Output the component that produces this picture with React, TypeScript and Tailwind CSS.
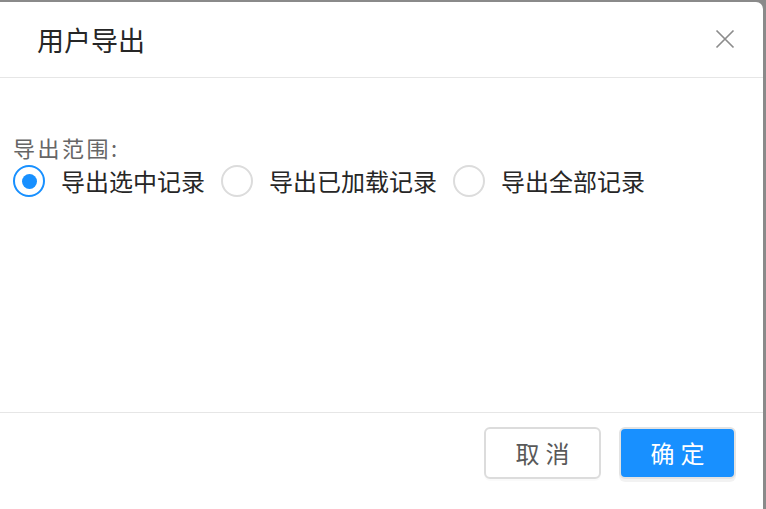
import { useState } from "react";

const options = [
  { value: "selected", label: "导出选中记录" },
  { value: "loaded", label: "导出已加载记录" },
  { value: "all", label: "导出全部记录" },
];

const CloseIcon = () => (
  <svg width="20" height="20" viewBox="0 0 20 20" fill="none">
    <path d="M1.5 1.5L18.5 18.5M18.5 1.5L1.5 18.5" stroke="#8c8c8c" strokeWidth="1.7" />
  </svg>
);

export default function App() {
  const [scope, setScope] = useState("selected");

  return (
    <div
      className="h-[509px] w-[766px] overflow-hidden bg-[#8a8a8a] pt-[2px] pr-[3px]"
      style={{ fontFamily: '"Noto Sans CJK SC", "Noto Sans", sans-serif' }}
    >
      <div className="flex h-[520px] flex-col rounded-tr-[7px] bg-white">
        {/* Header */}
        <div className="flex h-[76px] shrink-0 items-center justify-between border-b border-[#e6e6e6] pl-[37px] pr-[28px]">
          <h2 className="text-[27px] leading-none text-[#262626]">用户导出</h2>
          <button className="-mt-[2px]">
            <CloseIcon />
          </button>
        </div>

        {/* Body */}
        <div className="h-[334px] shrink-0 pl-[13px] pt-[57px]">
          <p className="text-[22px] leading-[24px] tracking-[2.5px] text-[#666]">
            导出范围:
          </p>
          <div className="mt-[6px] flex items-center">
            {options.map((opt) => {
              const checked = scope === opt.value;
              return (
                <label
                  key={opt.value}
                  className="mr-[16px] flex cursor-pointer items-center"
                  onClick={() => setScope(opt.value)}
                >
                  <span
                    className={
                      checked
                        ? "flex h-[32px] w-[32px] items-center justify-center rounded-full border-2 border-[#1890ff]"
                        : "flex h-[32px] w-[32px] items-center justify-center rounded-full border-2 border-[#dcdcdc]"
                    }
                  >
                    {checked && (
                      <span className="h-[15px] w-[15px] rounded-full bg-[#1890ff]" />
                    )}
                  </span>
                  <span className="ml-[16px] text-[24px] leading-[32px] text-[#262626]">
                    {opt.label}
                  </span>
                </label>
              );
            })}
          </div>
        </div>

        {/* Footer */}
        <div className="flex justify-end gap-[18px] border-t border-[#e6e6e6] pr-[27px] pt-[14px]">
          <button className="h-[52px] w-[117px] rounded-[6px] border-2 border-[#dcdcdc] bg-white pl-[6px] text-[24px] tracking-[6px] text-[#595959] shadow-[0_2px_0_rgba(0,0,0,0.02)]">
            取消
          </button>
          <button className="h-[52px] w-[117px] rounded-[6px] border-2 border-[#e3e3e3] bg-[#1890ff] pl-[6px] text-[24px] tracking-[6px] text-white shadow-[0_3px_0_rgba(0,0,0,0.05)]">
            确定
          </button>
        </div>
      </div>
    </div>
  );
}
